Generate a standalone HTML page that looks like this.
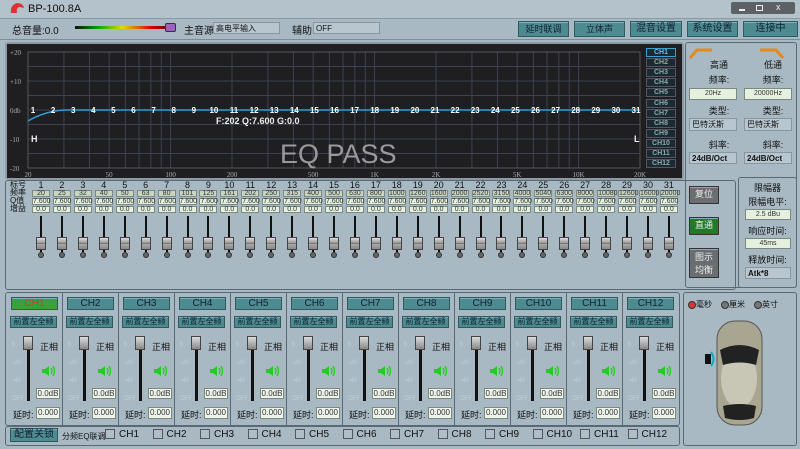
<!DOCTYPE html>
<html><head><meta charset="utf-8"><style>
*{box-sizing:border-box;margin:0;padding:0}
body{width:800px;height:449px;overflow:hidden;background:#a9b9c3;font-family:"Liberation Sans","Noto Sans CJK SC",sans-serif;font-size:9px;color:#111;position:relative}
.a{position:absolute}
.btn{position:absolute;background:#4e8b90;border:1px solid #2c5a60;color:#123;text-align:center;font-size:9px;line-height:14px;box-shadow:inset 0 1px 0 #7fb0b4}
.box{position:absolute;background:#e6f0df;border:1px solid #7a8a80;text-align:center;font-size:7px;line-height:6px;color:#333}
.panel{position:absolute;border:1px solid #5a6a74;border-radius:3px}
.dd{position:absolute;background:#b8c6cf;border:1px solid #8896a0;font-size:8px;line-height:11px;padding-left:2px}
</style></head><body>
<div class="a" style="left:0;top:0;width:800px;height:19px;background:#b4c2cb;border-bottom:1px solid #8a98a2"></div>
<svg class="a" style="left:8px;top:1px" width="18" height="16"><path d="M3 12 Q2 4 9 2 Q15 2 16 7 L12 6 Q8 6 9 12 Z" fill="#d33"/></svg>
<div class="a" style="left:28px;top:3px;font-size:11px">BP-100.8A</div>
<div class="a" style="left:731px;top:2px;width:64px;height:12px;background:#5c6166;border-radius:2px"></div>
<div class="a" style="left:739px;top:9px;width:6px;height:2px;background:#eee"></div>
<div class="a" style="left:756px;top:5px;width:7px;height:6px;border:1px solid #eee"></div>
<div class="a" style="left:776px;top:2px;color:#eee;font-size:9px">x</div>
<div class="a" style="left:12px;top:22px;font-size:10px">总音量:0.0</div>
<div class="a" style="left:75px;top:26px;width:95px;height:3px;background:linear-gradient(90deg,#111,#0a0 25%,#dd0 50%,#d00 80%,#600)"></div>
<div class="a" style="left:165px;top:23px;width:11px;height:9px;background:#a060c0;border:1px solid #333;border-radius:2px"></div>
<div class="a" style="left:184px;top:22px;font-size:10px">主音源</div>
<div class="dd" style="left:213px;top:22px;width:67px;height:12px">高电平输入</div>
<div class="a" style="left:292px;top:22px;font-size:10px">辅助</div>
<div class="dd" style="left:313px;top:22px;width:67px;height:12px">OFF</div>
<div class="btn" style="left:518px;top:21px;width:51px;height:16px">延时联调</div>
<div class="btn" style="left:574px;top:21px;width:51px;height:16px">立体声</div>
<div class="btn" style="left:630px;top:21px;width:52px;height:16px;font-size:10px">混音设置</div>
<div class="btn" style="left:687px;top:21px;width:51px;height:16px;font-size:10px">系统设置</div>
<div class="btn" style="left:743px;top:21px;width:55px;height:16px;font-size:10px">连接中</div>
<div class="a" style="left:0;top:39px;width:800px;height:1px;background:#7d8c96"></div>
<div class="a" style="left:5px;top:42px;width:679px;height:138px;background:#8c9aa3;border-radius:3px"></div>
<div class="a" style="left:7px;top:44px;width:675px;height:134px;background:#1f1f21"></div>
<svg class="a" style="left:0;top:40px" width="684" height="140" id="g"></svg>
<div class="a" style="left:216px;top:116px;color:#eee;font-weight:bold;font-size:9px">F:202 Q:7.600 G:0.0</div>
<div class="a" style="left:280px;top:139px;color:#9a9a9a;font-size:27px">EQ PASS</div>
<div class="a" style="left:31px;top:134px;color:#eee;font-weight:bold">H</div>
<div class="a" style="left:634px;top:134px;color:#eee;font-weight:bold">L</div>
<div id="chl"></div>
<div class="panel" style="left:5px;top:180px;width:731px;height:110px"></div>
<div class="a" style="left:10px;top:181px;line-height:8px;font-size:8px">标号<br>频率<br>Q值<br>增益</div>
<div id="eq"></div>
<div class="btn" style="left:689px;top:186px;width:30px;height:18px;background:#6a6e70;color:#eee;border-color:#333">复位</div>
<div class="btn" style="left:689px;top:217px;width:30px;height:18px;background:#1f7a2a;color:#eee;border-color:#333">直通</div>
<div class="btn" style="left:689px;top:248px;width:30px;height:30px;background:#6a6e70;color:#eee;border-color:#333;line-height:13px;padding-top:2px">图示<br>均衡</div>
<div class="panel" style="left:685px;top:42px;width:112px;height:246px"></div>
<svg class="a" style="left:688px;top:48px" width="110" height="12"><path d="M2 10 L9 2 H24" stroke="#e08a20" stroke-width="3" fill="none"/><path d="M72 2 H88 L95 10" stroke="#e08a20" stroke-width="3" fill="none"/></svg>
<div class="a" style="left:704px;top:58px;text-align:center;width:30px">高通</div>
<div class="a" style="left:758px;top:58px;text-align:center;width:30px">低通</div>
<div class="a" style="left:704px;top:73px;width:30px;text-align:center">频率:</div>
<div class="a" style="left:758px;top:73px;width:30px;text-align:center">频率:</div>
<div class="box" style="left:689px;top:88px;width:48px;height:12px;line-height:10px">20Hz</div>
<div class="box" style="left:744px;top:88px;width:48px;height:12px;line-height:10px">20000Hz</div>
<div class="a" style="left:704px;top:104px;width:30px;text-align:center">类型:</div>
<div class="a" style="left:758px;top:104px;width:30px;text-align:center">类型:</div>
<div class="dd" style="left:689px;top:118px;width:48px;height:13px">巴特沃斯</div>
<div class="dd" style="left:744px;top:118px;width:48px;height:13px">巴特沃斯</div>
<div class="a" style="left:704px;top:138px;width:30px;text-align:center">斜率:</div>
<div class="a" style="left:758px;top:138px;width:30px;text-align:center">斜率:</div>
<div class="dd" style="left:689px;top:152px;width:48px;height:12px;font-weight:bold">24dB/Oct</div>
<div class="dd" style="left:744px;top:152px;width:48px;height:12px;font-weight:bold">24dB/Oct</div>
<div class="a" style="left:738px;top:177px;width:59px;height:111px;border:1px solid #5a6a74;border-radius:3px"></div>
<div class="a" style="left:740px;top:181px;width:55px;text-align:center">限幅器</div>
<div class="a" style="left:740px;top:195px;width:55px;text-align:center">限幅电平:</div>
<div class="box" style="left:745px;top:209px;width:46px;height:11px;line-height:9px">2.5 dBu</div>
<div class="a" style="left:740px;top:224px;width:55px;text-align:center">响应时间:</div>
<div class="box" style="left:745px;top:238px;width:46px;height:11px;line-height:9px">45ms</div>
<div class="a" style="left:740px;top:253px;width:55px;text-align:center">释放时间:</div>
<div class="dd" style="left:745px;top:267px;width:46px;height:12px;font-weight:bold">Atk*8</div>
<div class="panel" style="left:5px;top:292px;width:675px;height:134px"></div>
<div id="ch"></div>
<div class="panel" style="left:5px;top:426px;width:675px;height:20px"></div>
<div class="btn" style="left:10px;top:428px;width:48px;height:14px;font-size:10px;line-height:12px">配置关锁</div>
<div class="a" style="left:62px;top:431px;font-size:8px">分频EQ联调</div>
<div id="cb"></div>
<div class="panel" style="left:683px;top:292px;width:114px;height:154px"></div>
<div class="a" style="left:688px;top:299px;font-size:8px;display:flex;gap:9px">
<span><b style="display:inline-block;width:8px;height:8px;border-radius:50%;background:#d33;border:1px solid #333;vertical-align:middle"></b>毫秒</span>
<span><b style="display:inline-block;width:8px;height:8px;border-radius:50%;background:#777;border:1px solid #333;vertical-align:middle"></b>厘米</span>
<span><b style="display:inline-block;width:8px;height:8px;border-radius:50%;background:#777;border:1px solid #333;vertical-align:middle"></b>英寸</span>
</div>
<svg class="a" style="left:700px;top:318px" width="90" height="110">
<rect x="17" y="3" width="45" height="104" rx="18" fill="#a8a690" stroke="#555"/>
<ellipse cx="39" cy="60" rx="18" ry="30" fill="#c8c6b4"/>
<path d="M20 32 Q40 22 59 32 L56 47 Q40 42 23 47 Z" fill="#222"/>
<path d="M23 88 Q40 84 56 88 L54 100 Q40 104 25 100 Z" fill="#222"/>
<rect x="5" y="36" width="6" height="10" fill="#111"/><path d="M11 34 Q16 41 11 48" stroke="#1ab" stroke-width="2" fill="none"/>
</svg>
<script>
var g=document.getElementById('g'),s='';
function X(f){return 28+Math.log10(f/20)/3*612}
[20,30,40,50,60,70,80,90,100,200,300,400,500,600,700,800,900,1000,2000,3000,4000,5000,6000,7000,8000,9000,10000,20000].forEach(function(f){var x=X(f);s+='<line x1="'+x+'" y1="12" x2="'+x+'" y2="128" stroke="#3e4150"/>'});
for(var i=0;i<9;i++){var y=12+i*14.5;s+='<line x1="28" y1="'+y+'" x2="640" y2="'+y+'" stroke="#3e4150"/>'}
s+='<rect x="28" y="12" width="612" height="116" fill="none" stroke="#555"/>';
[['+20',12],['+10',41],['0db',70],['-10',99],['-20',128]].forEach(function(a){s+='<text x="10" y="'+(a[1]+3)+'" fill="#aaa" font-size="7" font-family="Liberation Serif">'+a[0]+'</text>'});
[['20',20],['50',50],['100',100],['200',200],['500',500],['1K',1000],['2K',2000],['5K',5000],['10K',10000],['20K',20000]].forEach(function(a){s+='<text x="'+X(a[1])+'" y="137" fill="#aaa" font-size="7" text-anchor="middle" font-family="Liberation Serif">'+a[0]+'</text>'});
s+='<path d="M28 81 Q45 71 65 70 L640 70" stroke="#2aa0d8" stroke-width="1.5" fill="none"/>';
for(var i=1;i<=31;i++){var x=33+(i-1)*20.1;s+='<text x="'+x+'" y="73" fill="#fff" font-size="8" font-weight="bold" text-anchor="middle" font-family="Liberation Sans">'+i+'</text>'}
g.innerHTML=s;
var h='';for(var i=1;i<=12;i++){h+='<div class="a" style="left:646px;top:'+(48+(i-1)*10.1)+'px;width:30px;height:9px;border:1px solid '+(i==1?'#3aa0d0':'#556')+';background:#1a2a30;color:'+(i==1?'#5cc8f0':'#8aa')+';font-size:7px;line-height:7px;text-align:center;font-weight:bold">CH'+i+'</div>'}
document.getElementById('chl').innerHTML=h;
var fr=[20,25,32,40,50,63,80,101,125,161,202,250,315,400,500,630,800,1000,1260,1600,2000,2520,3150,4000,5040,6300,8000,10080,12600,16000,20000];
h='';for(var i=0;i<31;i++){var x=41+i*20.93;
h+='<div class="a" style="left:'+(x-10)+'px;top:180px;width:20px;text-align:center;font-size:9px">'+(i+1)+'</div>';
h+='<div class="box" style="left:'+(x-9)+'px;top:190px;width:18px;height:7px;background:#c8d6c0">'+fr[i]+'</div>';
h+='<div class="box" style="left:'+(x-9)+'px;top:198px;width:18px;height:7px">7.600</div>';
h+='<div class="box" style="left:'+(x-9)+'px;top:206px;width:18px;height:7px">0.0</div>';
h+='<div class="a" style="left:'+(x-1)+'px;top:216px;width:2px;height:36px;background:#111"></div>';
h+='<div class="a" style="left:'+(x-5)+'px;top:237px;width:10px;height:13px;background:linear-gradient(#ddd,#999 45%,#555 50%,#aaa 55%,#888);border:1px solid #444"></div>';
h+='<div class="a" style="left:'+(x-3)+'px;top:252px;width:6px;height:6px;border-radius:50%;background:#666;border:1px solid #333"></div>';}
document.getElementById('eq').innerHTML=h;
h='';for(var i=0;i<12;i++){var L=6+56*i;
if(i>0)h+='<div class="a" style="left:'+L+'px;top:293px;width:1px;height:132px;background:#5a6a74"></div>';
h+='<div class="btn" style="left:'+(L+5)+'px;top:297px;width:47px;height:13px;line-height:11px;font-size:10px;'+(i==0?'background:#3aa03a;color:#d33;':'')+'">CH'+(i+1)+'</div>';
h+='<div class="btn" style="left:'+(L+4)+'px;top:316px;width:47px;height:12px;line-height:10px;font-size:8px">前置左全频</div>';
[['0',342],['-20',360],['-40',378],['OFF',396]].forEach(function(a){h+='<div class="a" style="left:'+(L+6)+'px;top:'+a[1]+'px;font-size:6px;color:#c4d0d6">'+a[0]+'</div>'});
h+='<div class="a" style="left:'+(L+21)+'px;top:337px;width:3px;height:64px;background:#111"></div>';
h+='<div class="a" style="left:'+(L+17)+'px;top:336px;width:10px;height:14px;background:linear-gradient(#ddd,#888);border:1px solid #444"></div>';
h+='<div class="a" style="left:'+(L+34)+'px;top:340px;font-size:9px">正相</div>';
h+='<svg class="a" style="left:'+(L+35)+'px;top:365px" width="14" height="12"><path d="M1 4 H4 L8 1 V11 L4 8 H1Z" fill="#2c2"/><path d="M10 3 Q12 6 10 9 M12 1 Q15 6 12 11" stroke="#2c2" fill="none" stroke-width="1.3"/></svg>';
h+='<div class="box" style="left:'+(L+30)+'px;top:388px;width:24px;height:11px;line-height:9px;font-size:8px;background:#eef4ea">0.0dB</div>';
h+='<div class="a" style="left:'+(L+7)+'px;top:408px;font-size:9px">延时:</div>';
h+='<div class="box" style="left:'+(L+30)+'px;top:407px;width:24px;height:12px;line-height:10px;font-size:8px;background:#eef4ea">0.000</div>';}
document.getElementById('ch').innerHTML=h;
h='';for(var i=0;i<12;i++){var x=105+i*47.5;h+='<div class="a" style="left:'+x+'px;top:429px;width:10px;height:10px;border:1px solid #556;background:#b0bec6"></div><div class="a" style="left:'+(x+14)+'px;top:429px;font-size:10px">CH'+(i+1)+'</div>'}
document.getElementById('cb').innerHTML=h;
</script>
</body></html>
